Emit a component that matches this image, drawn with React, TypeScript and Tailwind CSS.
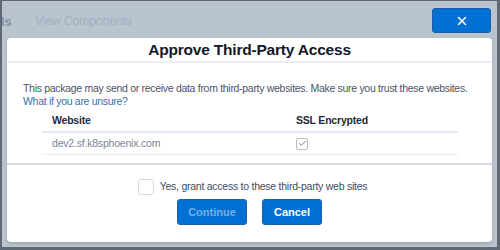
import { X, Check } from "lucide-react";

const font = { fontFamily: '"Liberation Sans", Arial, sans-serif' };

export default function App() {
  return (
    <div
      className="flex h-[250px] w-[500px] flex-col overflow-hidden border-t border-r-[3px] border-b-[3px] border-l-2 border-[#5f6873] bg-[#b9c4cf]"
      style={font}
    >
      {/* page behind the modal */}
      <div className="flex h-[37px] shrink-0 items-center">
        <span className="-ml-[1px] mt-[4px] text-[13px] font-bold text-[#8593a3]">ls</span>
        <span className="ml-[23px] mt-[4px] text-[12.5px] tracking-[-0.3px] text-[#a3b1c1]">View Components</span>
        <button className="mt-[2px] mr-[6px] ml-auto flex h-[25px] w-[59px] items-center justify-center rounded-[3px] border border-[#1b5fa8] bg-[#0070d2] text-white">
          <X size={14} strokeWidth={2.5} />
        </button>
      </div>

      <div className="ml-[5px] mr-[5px] flex h-[204px] flex-col rounded-[4px] bg-white shadow-[0_2px_3px_rgba(0,0,0,0.15)]">
        <div className="flex h-[25px] shrink-0 items-center justify-center border-b-2 border-[#e8eff7]">
          <h1 className="text-[15.5px] leading-none font-bold tracking-[-0.2px] text-[#111827]">
            Approve Third-Party Access
          </h1>
        </div>

        <div className="flex h-[102px] shrink-0 flex-col border-b-2 border-[#d8dde4]">
          <p className="mt-[19px] pl-[16px] text-[10.5px] leading-[13px] tracking-[-0.3px] text-[#4a5565]">
            This package may send or receive data from third-party websites. Make sure you trust these websites.
            <span className="block text-[#3d6fa3]">What if you are unsure?</span>
          </p>

          <div className="mt-[3px] ml-[35px] mr-[34px] text-[10.5px] tracking-[-0.2px]">
            <div className="grid h-[22px] grid-cols-[254px_1fr] items-center border-b-2 border-[#e3eaf3]">
              <span className="pl-[10px] font-bold text-[#1f2937]">Website</span>
              <span className="font-bold text-[#1f2937]">SSL Encrypted</span>
            </div>
            <div className="grid h-[22px] grid-cols-[254px_1fr] items-center border-b border-[#e7edf4]">
              <span className="pl-[10px] text-[#7b8694]">dev2.sf.k8sphoenix.com</span>
              <span className="flex h-[12px] w-[12px] items-center justify-center rounded-[2px] border border-[#b5bcc5] text-[#555]">
                <Check size={9} strokeWidth={2} />
              </span>
            </div>
          </div>
        </div>

        <div className="flex flex-1 flex-col items-center">
          <label className="mt-[14px] ml-[6px] flex items-center gap-[6px]">
            <span className="h-[16px] w-[16px] rounded-[3px] border border-[#d5d9de] bg-white" />
            <span className="text-[10.5px] tracking-[-0.25px] text-[#3f4d63]">
              Yes, grant access to these third-party web sites
            </span>
          </label>
          <div className="mt-[4px] flex gap-[15px]">
            <button className="h-[26px] w-[70px] rounded-[3px] border border-[#1b5fa8] bg-[#0070d2] text-[11px] font-bold text-[#79aee6]">
              Continue
            </button>
            <button className="h-[26px] w-[60px] rounded-[3px] border border-[#1b5fa8] bg-[#0070d2] text-[11px] font-bold text-white">
              Cancel
            </button>
          </div>
        </div>
      </div>
    </div>
  );
}
